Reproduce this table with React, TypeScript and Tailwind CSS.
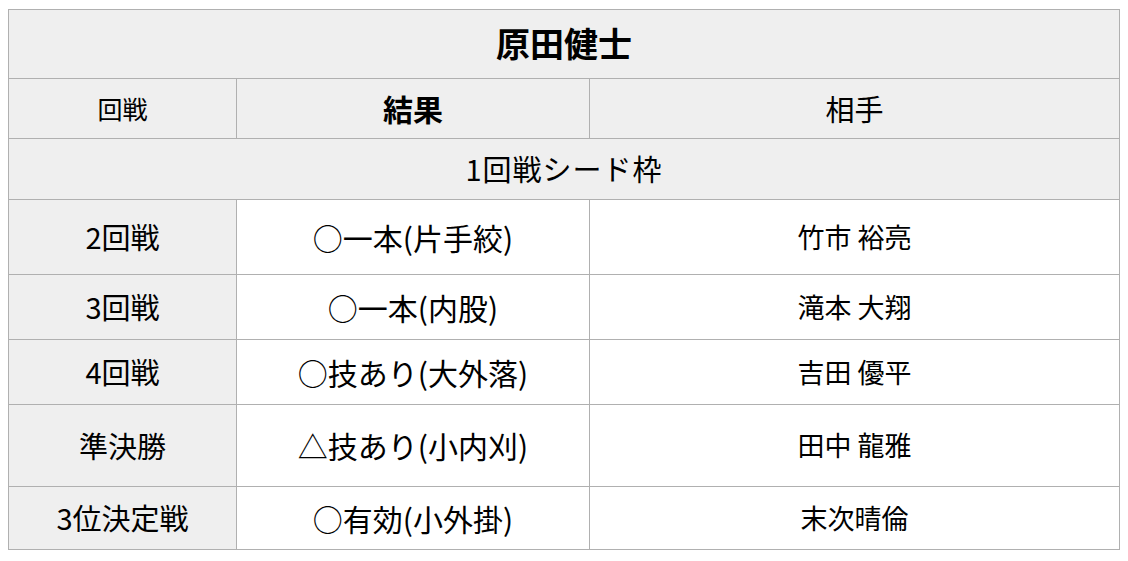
import React from 'react';

const rows = [
  { round: '2回戦', result: '○一本(片手絞)', opponent: '竹市 裕亮', h: 'h-[75px]' },
  { round: '3回戦', result: '○一本(内股)', opponent: '滝本 大翔', h: 'h-[65px]' },
  { round: '4回戦', result: '○技あり(大外落)', opponent: '吉田 優平', h: 'h-[65px]' },
  { round: '準決勝', result: '△技あり(小内刈)', opponent: '田中 龍雅', h: 'h-[82px]' },
  { round: '3位決定戦', result: '○有効(小外掛)', opponent: '末次晴倫', h: 'h-[63px]' },
];

export default function App() {
  return (
    <div
      className="bg-white w-[1128px] h-[561px] pt-[9px] pl-[8px] text-black"
      style={{ fontFamily: '"Noto Sans CJK JP", "Noto Sans", sans-serif' }}
    >
      <table className="border-collapse w-[1111px] table-fixed text-center">
        <colgroup>
          <col className="w-[228px]" />
          <col className="w-[353px]" />
          <col className="w-[530px]" />
        </colgroup>
        <tbody>
          <tr className="h-[69px] bg-[#efefef]">
            <th colSpan={3} className="border border-[#b0b0b0] text-[34px] font-bold pb-[4px]">
              原田健士
            </th>
          </tr>
          <tr className="h-[60px] bg-[#efefef]">
            <td className="border border-[#b0b0b0] text-[25px]">回戦</td>
            <th className="border border-[#b0b0b0] text-[30px] font-bold">結果</th>
            <td className="border border-[#b0b0b0] text-[29px]">相手</td>
          </tr>
          <tr className="h-[61px] bg-[#efefef]">
            <td colSpan={3} className="border border-[#b0b0b0] text-[29px] tracking-[1px]">
              1回戦シード枠
            </td>
          </tr>
          {rows.map((r) => (
            <tr key={r.round} className={r.h}>
              <td className="border border-[#b0b0b0] bg-[#efefef] text-[29px]">{r.round}</td>
              <td className="border border-[#b0b0b0] text-[30px]">{r.result}</td>
              <td className="border border-[#b0b0b0] text-[27px]">{r.opponent}</td>
            </tr>
          ))}
        </tbody>
      </table>
    </div>
  );
}
